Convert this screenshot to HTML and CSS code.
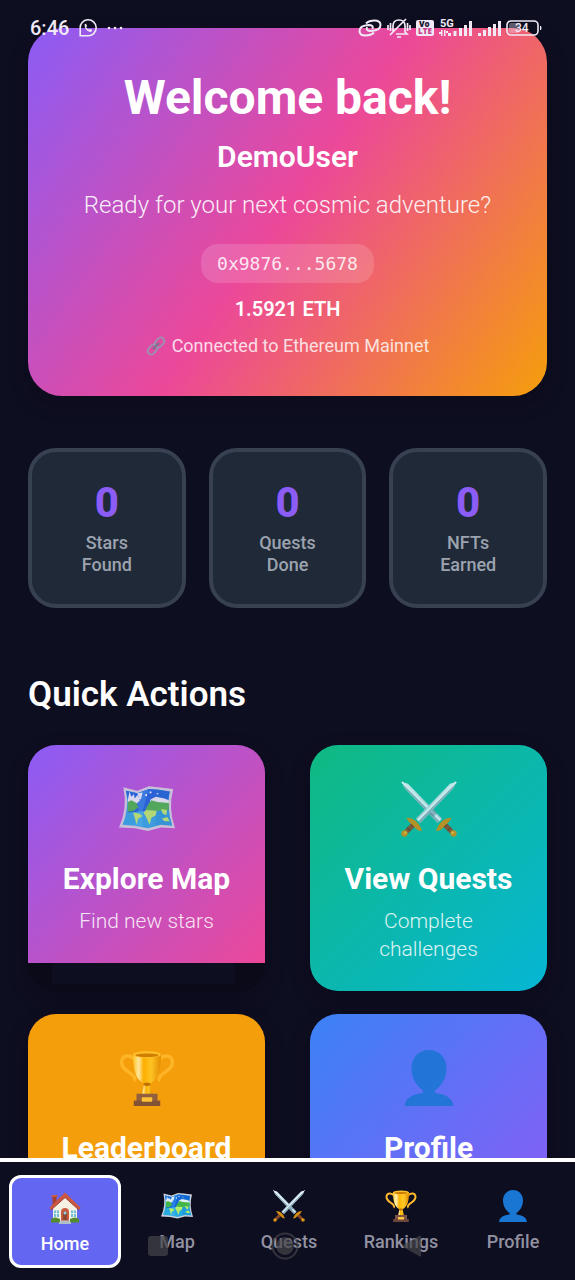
FILE: index.html
```html
<!DOCTYPE html>
<html lang="en">
<head>
<meta charset="utf-8">
<meta name="viewport" content="width=device-width, initial-scale=1">
<title>Home</title>
<link rel="stylesheet" href="styles.css">
</head>
<body>
<svg class="defs" aria-hidden="true">
  <defs>
    <linearGradient id="blade" x1="0" y1="0" x2="1" y2="1"><stop offset="0" stop-color="#e3f2f9"/><stop offset="1" stop-color="#a9c6d6"/></linearGradient>
    <linearGradient id="gold" x1="0" x2="1"><stop offset="0" stop-color="#ffca28"/><stop offset=".2" stop-color="#fff3b8"/><stop offset=".38" stop-color="#ffb300"/><stop offset=".65" stop-color="#ffca28"/><stop offset="1" stop-color="#e08a00"/></linearGradient>
    <symbol id="map" viewBox="0 0 64 64">
      <path d="M5 7 21 11 34 6 45 7 62 9Q56 31 64 54L48 53 33 57 18 54 0 53Q10 31 5 7Z" fill="#cdd1da"/>
      <path d="M8 11 21 14 34 9 45 10 58 12Q54 31 61 51L48 50 33 54 18 51 4 50Q12 31 8 11Z" fill="#29a9e1"/>
      <path d="M8 11 21 14 34 9 45 10 58 12Q55 23 57 32L33 34 10 36Q12 24 8 11Z" fill="#1565d8"/>
      <path d="M21 14 34 9 27 34 27 53 18 51 22 35Z" fill="#4fc3f7" opacity=".3"/>
      <path d="M42 10V50L61 51Q54 31 58 12Z" fill="#0277bd" opacity=".2"/>
      <path d="M12 12 14 18 17 15 18 20 21 16 24 22 21 25 18 27 10 26 10 22ZM21 14 27 13 25 21 23 20ZM36 21 42 18 52 20 57 22 57 28 45 27 35 25Z" fill="#e1eef3"/>
      <path d="M10 24 14 22 20 25 22 30 17 34 10 35ZM33 27 37 22 44 24 57 25 57 33 48 34 39 34 30 33Z" fill="#43b649"/>
      <path d="M16 36 23 37 27 40 22 43 20 50 18 42ZM31 33 43 34 42 39 37 42 35 50 31 41 28 36ZM48 32 55 33 54 39 50 37ZM49 43 55 41 58 46 52 46Z" fill="#b4ef67"/>
      <path d="M35 12h2v2h-2zM30 15h2v2h-2zM43 14h2v1h-2z" fill="#fff"/>
    </symbol>
    <symbol id="swords" viewBox="0 0 64 64">
      <g id="sword">
        <path d="M1 1 8 3 47 43 42 48 4 8Z" fill="url(#blade)"/>
        <path d="M1 1 4 8 42 48 44 46Z" fill="#8fafc0"/>
        <path d="M1 1 45 45" stroke="#e9f7fc" stroke-width="2"/>
        <path d="m45 49 4-4 11 11-4 4Z" fill="#8d4a2b"/>
        <path d="m49 53 4-4M53 57l4-4" stroke="#4e2c20" stroke-width="1"/>
        <path d="M58 42Q51 42 47 46 42 50 40 57 46 57 50 51 55 48 58 42Z" fill="#d28c13"/>
        <circle cx="60" cy="60" r="3.6" fill="#d28c13"/>
        <circle cx="59" cy="59" r="1.4" fill="#f9bd35"/>
      </g>
      <path d="m32 37 5-5 4 5-4 4Z" fill="#54798f" opacity=".5"/>
      <use href="#sword" transform="matrix(-1 0 0 1 64 0)"/>
    </symbol>
    <symbol id="trophy" viewBox="0 0 64 64">
      <g fill="none" stroke="#ffb92c" stroke-width="4"><path d="M19 12C14 5 4 5 3 13c-1 9 10 12 14 17q2 4 0 5"/><path d="M45 12C50 5 60 5 61 13c1 9-10 12-14 17q-2 4 0 5"/></g>
      <path d="M29 38h6l3 13H26Z" fill="url(#gold)"/>
      <path d="M16 4Q16 29 24 35q4 4 8 4 4 0 8-4 8-6 8-31Z" fill="url(#gold)"/>
      <ellipse cx="32" cy="5" rx="16" ry="4" fill="#ffc12c"/><ellipse cx="32" cy="6" rx="13" ry="2" fill="#c97900"/>
      <ellipse cx="32" cy="39" rx="4" ry="2" fill="#b96d00"/>
      <path d="M20 50h24v8h3v6H17v-6h3Z" fill="#805348"/><path d="M17 58h30v6H17Z" fill="#6d453b"/>
      <rect x="26" y="54" width="12" height="5" rx="1" fill="#ffc83d"/>
    </symbol>
    <symbol id="person" viewBox="0 0 64 64">
      <path d="M32 0C20 0 12 9 12 21c0 11 6 20 13 25v3C15 50 5 54 4 64h56C59 54 49 50 39 49v-3c7-5 13-14 13-25C52 9 44 0 32 0Z" fill="#1976d2"/>
    </symbol>
    <symbol id="house" viewBox="0 0 64 64">
      <path d="M7 8h8v22H7Z" fill="#a5402f"/><path d="M5 6h12v4H5Z" fill="#c75b43"/>
      <path d="M8 31 32 8 56 31V60H8Z" fill="#f7f1e3"/>
      <path d="M32 1 1 31l3 5L32 11l28 25 3-5Z" fill="#cb5740"/><path d="M4 36 32 11l28 25" fill="none" stroke="#9e3f31" stroke-width="2"/>
      <path d="M24 61V40q0-8 8-8t8 8v21Z" fill="#c65b3e"/><path d="M28 56V42q4-5 8 0v14Z" fill="#8d4432"/><circle cx="32" cy="42" r="3" fill="#89d6e8"/>
      <path d="M10 37h10v13H10ZM44 37h10v13H44Z" fill="#72bdd0"/><path d="M15 37v13M10 43h10M49 37v13M44 43h10" stroke="#fff" stroke-width="1.5"/>
      <path d="M4 54q8-6 18 0v7H4ZM42 54q10-6 18 0v7H42Z" fill="#558b2f"/>
      <path d="M23 57h18v3h3v4H20v-4h3Z" fill="#b0bec5"/>
    </symbol>
  </defs>
</svg>

<div class="app">
  <div class="status">
    <div class="status-side">
      <span class="clock">6:46</span>
      <svg width="18" height="18" viewBox="0 0 18 18" fill="none" stroke="currentColor" stroke-width="1.6"><path d="M1.200 16.800V9.500A8 8 0 1 1 9.200 16.800Z"/><path d="M5.600 5.200 7 4.800 8 7 7.200 8.200Q8 10 10 10.800L11 9.800l2.200 1.100q-.3 2-2 2.100Q5.400 11.500 5.600 5.200Z" fill="currentColor" stroke="none"/></svg>
      <svg width="17" height="4" viewBox="0 0 17 4" fill="currentColor"><circle cx="2" cy="2" r="1.300"/><circle cx="8" cy="2" r="1.300"/><circle cx="14" cy="2" r="1.300"/></svg>
    </div>
    <div class="status-side status-right">
      <svg width="24" height="18" viewBox="0 0 24 18" fill="none" stroke="currentColor" stroke-width="2"><path d="M14.500 10Q16 6 10.500 6 1.500 6.500 1.500 12q0 4.500 6 4.500 5.500 0 8.500-3"/><path d="M9 8Q7.500 12 13 12q9.500-.5 9.500-6 0-4.500-6-4.500-5.500 0-8.500 3"/></svg>
      <svg width="24" height="20" viewBox="0 0 24 20" fill="none" stroke="currentColor" stroke-width="1.700"><path d="M6 14V8q0-6 6-6 6 0 6 6v6l2 2H9M3 17 19 1M10 19h4M1 7v5M3.500 5v8M20.500 5v8M23 7v5"/></svg>
      <svg width="18" height="16" viewBox="0 0 18 16"><rect width="18" height="16" rx="2" fill="currentColor"/><g class="badge-text"><text x="3" y="7">Vo</text><text class="badge-low" x="2" y="14">LTE</text></g></svg>
      <svg width="34" height="20" viewBox="0 0 34 20" fill="currentColor"><text class="net-text" x="1" y="9">5G</text><path d="M0 14h2v2H0ZM2 12h1.500v6H2ZM5 12h1.500v6H5ZM7 13h2v2H7ZM9 15h3v3H9ZM14.500 13h3v5h-3ZM20 10h3v8h-3ZM25 7h3v11h-3ZM30 3h3v15h-3Z"/></svg>
      <svg width="23" height="20" viewBox="0 0 23 20" fill="currentColor"><path d="M0 15h3v3H0ZM5 12h3v6H5ZM10 9h3v9h-3ZM15 6h3v12h-3ZM20 3h3v15h-3Z"/></svg>
      <svg width="36" height="16" viewBox="0 0 36 16" fill="none"><rect x="1" y="1" width="31" height="14" rx="4" stroke="currentColor" stroke-width="1.600"/><path d="M5 3h8v10H5q-2 0-2-2V5q0-2 2-2Z" fill="currentColor" opacity=".35"/><path d="M34 6h1q1 2 0 4h-1Z" fill="currentColor"/><text class="battery-text" x="9" y="12">34</text></svg>
    </div>
  </div>

  <main class="content">
    <section class="hero">
      <h1>Welcome back!</h1>
      <p class="user">DemoUser</p>
      <p class="tagline">Ready for your next cosmic adventure?</p>
      <p class="wallet">0x9876...5678</p>
      <p class="balance">1.5921 ETH</p>
      <p class="network">
        <svg width="20" height="20" viewBox="0 0 20 20" fill="none" stroke="#8ea0b2" stroke-width="2"><rect x="10" y="1" width="7" height="11" rx="3.500" transform="rotate(42 13.500 6.500)"/><rect x="3" y="8" width="7" height="11" rx="3.500" transform="rotate(42 6.500 13.500)"/><path d="m7 13 6-6" stroke="#607d8b"/></svg>
        <span>Connected to Ethereum Mainnet</span>
      </p>
    </section>

    <section class="stats">
      <div class="stat"><strong>0</strong><span>Stars<br>Found</span></div>
      <div class="stat"><strong>0</strong><span>Quests<br>Done</span></div>
      <div class="stat"><strong>0</strong><span>NFTs<br>Earned</span></div>
    </section>

    <h2>Quick Actions</h2>
    <section class="actions">
      <div class="tile">
        <button class="card card-map"><svg class="art"><use href="#map"/></svg><span class="card-title">Explore Map</span><span class="card-text">Find new stars</span></button>
        <div class="tile-shade"></div>
      </div>
      <div class="tile"><button class="card card-quests"><svg class="art"><use href="#swords"/></svg><span class="card-title">View Quests</span><span class="card-text">Complete challenges</span></button></div>
      <div class="tile"><button class="card card-board"><svg class="art"><use href="#trophy"/></svg><span class="card-title">Leaderboard</span></button></div>
      <div class="tile"><button class="card card-profile"><svg class="art"><use href="#person"/></svg><span class="card-title">Profile</span></button></div>
    </section>
  </main>

  <nav class="tabs">
    <button class="tab active"><svg><use href="#house"/></svg><span>Home</span></button>
    <button class="tab"><svg><use href="#map"/></svg><span>Map</span></button>
    <button class="tab"><svg><use href="#swords"/></svg><span>Quests</span></button>
    <button class="tab"><svg><use href="#trophy"/></svg><span>Rankings</span></button>
    <button class="tab"><svg><use href="#person"/></svg><span>Profile</span></button>
  </nav>

  <div class="system" aria-hidden="true">
    <svg width="28" height="28" viewBox="0 0 28 28"><rect x="4" y="4" width="20" height="20" rx="3" fill="currentColor"/></svg>
    <svg width="28" height="28" viewBox="0 0 28 28"><circle cx="14" cy="14" r="12.500" fill="none" stroke="currentColor" stroke-width="2"/><circle cx="14" cy="14" r="9" fill="currentColor"/></svg>
    <svg width="28" height="28" viewBox="0 0 28 28"><path d="M23 4v20q0 1-2 0L5 15q-1-1 0-2L21 4q2-1 2 0Z" fill="currentColor"/></svg>
  </div>
</div>
</body>
</html>
```
FILE: styles.css
```css
* { box-sizing: border-box; }
body, h1, h2, p { margin: 0; }
body {
  background: #0e0e21;
  color: #fff;
  font-family: Roboto, "Noto Sans", sans-serif;
}
button { font: inherit; color: inherit; border: 0; background: none; padding: 0; }
svg { flex: none; }
.defs { position: absolute; width: 0; height: 0; }

.app { position: relative; display: flex; flex-direction: column; height: 100vh; overflow: hidden; }
.content { flex: 1; min-height: 0; overflow: hidden; padding: 28px 28px 0; }

.status {
  position: absolute;
  inset: 18px 33px auto 30px;
  display: flex;
  justify-content: space-between;
  color: #f1eaf6;
}
.status-side { display: flex; align-items: center; gap: 10px; height: 20px; }
.status-right { gap: 5px; }
.clock { font-size: 20px; font-weight: 500; }
.badge-text { font: 800 8px "Open Sans", sans-serif; fill: #1d1833; }
.badge-low { fill: #c9408c; }
.net-text { font: 700 11px Roboto, sans-serif; }
.battery-text { font: 500 12px Roboto, sans-serif; fill: currentColor; }

.hero {
  display: flex;
  flex-direction: column;
  align-items: center;
  padding: 42px 24px 38px;
  border-radius: 34px;
  background: linear-gradient(125deg, #8b5cf6, #ec4899 50%, #f59e0b);
  box-shadow: 0 8px 20px #07071244;
  text-align: center;
}
h1 { font-size: 48px; line-height: 56px; font-weight: 700; }
.user { margin-top: 13px; font-size: 30px; line-height: 36px; font-weight: 600; }
.tagline { margin-top: 14px; font-size: 24px; line-height: 32px; font-weight: 300; opacity: .9; }
.wallet {
  margin-top: 23px;
  padding: 0 16px;
  border-radius: 17px;
  background: #ffffff26;
  color: #ffffffd9;
  font: 18px/39px "DejaVu Sans Mono", monospace;
}
.balance { margin-top: 12px; font-size: 20px; line-height: 28px; font-weight: 600; }
.network { display: flex; align-items: center; gap: 6px; margin-top: 11px; font-size: 18px; line-height: 24px; opacity: .8; }

.stats { display: grid; grid-template-columns: repeat(3, 1fr); gap: 23px; margin-top: 52px; }
.stat {
  display: flex;
  flex-direction: column;
  align-items: center;
  gap: 5px;
  padding: 27px 8px 28px;
  border: 4px solid #374151;
  border-radius: 28px;
  background: #1f2937;
  text-align: center;
}
.stat strong { color: #8b5cf6; font-size: 42px; line-height: 48px; font-weight: 800; }
.stat span { color: #9ca3af; font-size: 18px; line-height: 22px; font-weight: 500; }

h2 { margin: 65px 0 28px; font-size: 35px; line-height: 44px; font-weight: 600; }
.actions { display: grid; grid-template-columns: 1fr 1fr; gap: 23px 45px; }
.tile { display: flex; flex-direction: column; border-radius: 28px; box-shadow: 0 8px 20px #07071255; overflow: hidden; }
.tile-shade { flex: 1; border: solid #0a0a18; border-width: 0 30px 7px 24px; }
.card { display: flex; flex-direction: column; align-items: center; width: 100%; min-height: 218px; padding: 36px 28px 28px; }
.card-map { background: linear-gradient(133deg, #8b5cf6, #ec4899); }
.card-quests { background: linear-gradient(136deg, #10b981, #06b6d4); }
.card-board { background: #f59e0b; }
.card-profile { background: linear-gradient(133deg, #3b82f6, #8b5cf6); }
.art { width: 56px; height: 56px; opacity: .85; }
.card-title { margin-top: 24px; font-size: 30px; line-height: 36px; font-weight: 700; white-space: nowrap; }
.card-text { margin-top: 10px; font-size: 21px; line-height: 28px; font-weight: 300; opacity: .85; }

.tabs { display: grid; grid-template-columns: repeat(5, 1fr); flex: none; padding: 13px 6px 12px 9px; border-top: 4px solid #fff; background: #0e0e21; }
.tab { display: flex; flex-direction: column; align-items: center; gap: 9px; height: 93px; padding-top: 15px; color: #9292a1; font-size: 18px; line-height: 22px; font-weight: 500; }
.tab svg { width: 32px; height: 32px; }
.tab.active { padding-top: 14px; border: 3px solid #fff; border-radius: 12px; background: #6366f1; color: #fff; }

.system { position: absolute; inset: auto 26% 20px 25%; display: flex; justify-content: space-between; color: #444448b3; }
```
